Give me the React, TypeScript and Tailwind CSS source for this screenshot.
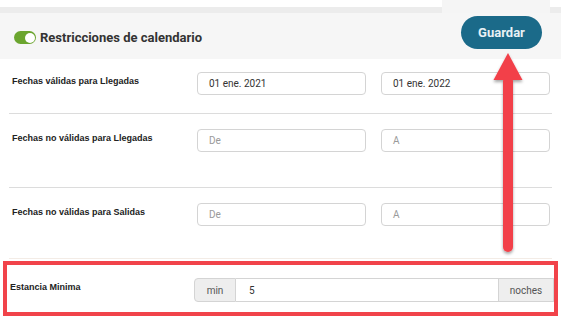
import React from "react";

const labelCls = "font-['Liberation_Sans',Arial,sans-serif] text-[9px] font-bold text-[#222]";
const inputCls =
  "h-[23px] w-[169px] rounded-[4px] border border-[#d4d4d4] bg-white px-[11px] flex items-center text-[10px] font-['Roboto',sans-serif]";

const DateRow = ({ label, from, to, h, top, placeholder }: { label: string; from: string; to: string; h: string; top: string; placeholder?: boolean }) => (
  <div className={`flex ${h} ${top} pl-[12px] pr-[10px]`}>
    <div className={`w-[185px] pt-[3px] ${labelCls}`}>{label}</div>
    <div className="flex gap-[15px]">
      <div className={`${inputCls} ${placeholder ? "text-[#9a9a9a]" : "text-[#333]"}`}>{from}</div>
      <div className={`${inputCls} ${placeholder ? "text-[#9a9a9a]" : "text-[#333]"}`}>{to}</div>
    </div>
  </div>
);

export default function App() {
  return (
    <div className="relative w-[561px] h-[329px] overflow-hidden bg-white">
      {/* top strip */}
      <div className="h-[7px] bg-white" />
      <div className="absolute left-[442px] top-0 h-[13px] w-[108px] bg-[#f5f5f5]" />

      {/* header */}
      <div className="flex h-[52px] items-center justify-between border-t-[6px] border-[#ececec] bg-[#f6f6f6] pl-[14px] pr-[19px]">
        <div className="flex items-center gap-[4px] pt-[3px]">
          <div className="flex h-[13px] w-[22px] items-center justify-end rounded-full bg-[#6ba52f] pr-[1.5px]">
            <div className="h-[10px] w-[10px] rounded-full bg-white" />
          </div>
          <span className="font-['Roboto',sans-serif] text-[13px] font-bold text-[#333]">Restricciones de calendario</span>
        </div>
        <button className="mt-[-7px] h-[33px] w-[81px] rounded-full bg-[#1b6a89] font-['Roboto',sans-serif] text-[13px] font-bold text-[#e8f1f5]">
          Guardar
        </button>
      </div>

      <DateRow label="Fechas válidas para Llegadas" from="01 ene. 2021" to="01 ene. 2022" h="h-[54px]" top="pt-[13px]" />
      <div className="mx-[9px] h-px bg-[#dcdcdc]" />
      <DateRow label="Fechas no válidas para Llegadas" from="De" to="A" h="h-[73px]" top="pt-[15px]" placeholder />
      <div className="mx-[9px] h-px bg-[#dcdcdc]" />
      <DateRow label="Fechas no válidas para Salidas" from="De" to="A" h="h-[70px]" top="pt-[15px]" placeholder />
      <div className="mx-[9px] h-px bg-[#f3ece6]" />

      {/* estancia minima */}
      <div className="mx-[3px] mt-[2px] flex h-[55px] border-[4px] border-[#f1434a] pl-[3px] pt-[13px]">
        <div className={`w-[184px] pt-[3px] ${labelCls}`}>Estancia Minima</div>
        <div className="flex h-[24px] flex-1 font-['Roboto',sans-serif] text-[10px]">
          <div className="flex w-[42px] items-center justify-center rounded-l-[4px] border border-[#d4d4d4] bg-[#eeeeee] text-[#555]">min</div>
          <div className="flex flex-1 items-center border-y border-[#d4d4d4] bg-white px-[13px] text-[#333]">5</div>
          <div className="flex w-[56px] items-center justify-center border border-[#d4d4d4] bg-[#eeeeee] text-[#555]">noches</div>
        </div>
      </div>

      {/* arrow annotation */}
      <svg className="pointer-events-none absolute left-0 top-0" width="561" height="329" viewBox="0 0 561 329">
        <defs>
          <filter id="sh" x="-50%" y="-10%" width="200%" height="120%">
            <feDropShadow dx="0" dy="2" stdDeviation="1.5" floodColor="#000" floodOpacity="0.35" />
          </filter>
        </defs>
        <g filter="url(#sh)" fill="#f2414a">
          <polygon points="508,53 522.5,80 493.5,80" />
          <rect x="503" y="76" width="10" height="176" rx="5" />
        </g>
      </svg>
    </div>
  );
}
